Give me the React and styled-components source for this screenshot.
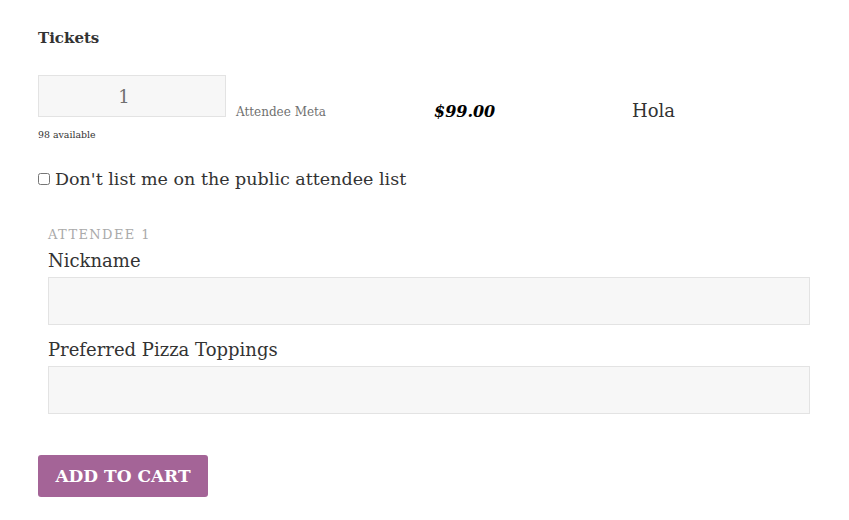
import React from 'react';
import styled, { createGlobalStyle } from 'styled-components';

const Global = createGlobalStyle`
  body {
    margin: 0;
    background: #fff;
    font-family: "DejaVu Serif", "Liberation Serif", serif;
    color: #333;
  }
`;

const Form = styled.form`
  padding: 26px 38px 23px;
  width: 773px;
`;

const Title = styled.h3`
  margin: 0 0 25px;
  font-size: 15px;
  font-weight: 700;
  line-height: 24px;
  color: #333;
`;

const TicketRow = styled.div`
  display: flex;
  align-items: flex-end;
`;

const QtyCell = styled.div`
  width: 188px;
  display: flex;
  flex-direction: column;
`;

const QtyInput = styled.input`
  box-sizing: border-box;
  width: 188px;
  height: 42px;
  padding: 0 16px 0 0;
  border: 1px solid #e3e3e3;
  background: #f7f7f7;
  text-align: center;
  font-family: inherit;
  font-size: 18px;
  color: #707070;
  outline: none;
`;

const Available = styled.div`
  font-size: 9.4px;
  line-height: 14px;
  margin-top: 11px;
  color: #333;
`;

const Meta = styled.div`
  font-size: 12px;
  color: #707070;
  margin: 0 0 23px 10px;
  width: 198px;
`;

const Price = styled.div`
  font-size: 16px;
  font-weight: 700;
  font-style: italic;
  color: #000;
  margin-bottom: 21px;
  width: 198px;
`;

const Name = styled.div`
  font-size: 18px;
  color: #333;
  margin-bottom: 21px;
`;

const CheckRow = styled.label`
  display: flex;
  align-items: center;
  gap: 5px;
  margin-top: 22px;
  font-size: 17.5px;
  line-height: 30px;
`;

const Check = styled.input`
  margin: 0;
  width: 12px;
  height: 12px;
`;

const Attendee = styled.div`
  padding: 0 0 0 10px;
  margin-top: 31px;
`;

const AttendeeHead = styled.div`
  font-size: 13px;
  letter-spacing: 1.4px;
  color: #aaa;
  line-height: 20px;
`;

const FieldLabel = styled.div`
  font-size: 18px;
  line-height: 32px;
  margin-top: ${p => p.$top || 0}px;
`;

const TextBox = styled.input`
  display: block;
  box-sizing: border-box;
  width: 762px;
  height: 48px;
  border: 1px solid #e3e3e3;
  background: #f7f7f7;
  outline: none;
`;

const Button = styled.button`
  margin-top: 41px;
  width: 170px;
  height: 42px;
  border: 0;
  border-radius: 3px;
  background: #a46497;
  color: #fff;
  font-family: inherit;
  font-weight: 700;
  font-size: 17px;
  padding: 0;
`;

export default function App() {
  return (
    <>
      <Global />
      <Form onSubmit={e => e.preventDefault()}>
        <Title>Tickets</Title>
        <TicketRow>
          <QtyCell>
            <QtyInput defaultValue="1" />
            <Available>98 available</Available>
          </QtyCell>
          <Meta>Attendee Meta</Meta>
          <Price>$99.00</Price>
          <Name>Hola</Name>
        </TicketRow>
        <CheckRow>
          <Check type="checkbox" />
          Don't list me on the public attendee list
        </CheckRow>
        <Attendee>
          <AttendeeHead>ATTENDEE 1</AttendeeHead>
          <FieldLabel>Nickname</FieldLabel>
          <TextBox />
          <FieldLabel $top={9}>Preferred Pizza Toppings</FieldLabel>
          <TextBox />
        </Attendee>
        <Button type="submit">ADD TO CART</Button>
      </Form>
    </>
  );
}
